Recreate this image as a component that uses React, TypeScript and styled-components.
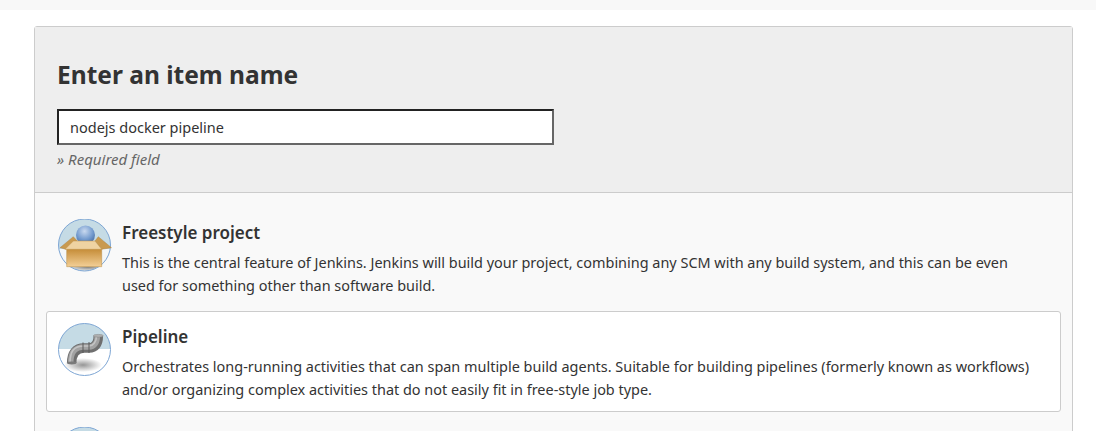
import React from 'react';
import styled, { createGlobalStyle } from 'styled-components';

const Global = createGlobalStyle`
  html, body { margin: 0; padding: 0; background: #fff; overflow: hidden; height: 431px; }
  body { font-family: "Noto Sans", "Open Sans", sans-serif; color: #333; }
`;

const TopStrip = styled.div`
  height: 10px;
  background: #f8f8f8;
`;

const Page = styled.main`
  padding: 16px 23px 0 34px;
`;

const Panel = styled.section`
  border: 1px solid #ccc;
  border-radius: 3px 3px 0 0;
  background: #f9f9f9;
`;

const Header = styled.header`
  background: #eee;
  border-bottom: 1px solid #ccc;
  padding: 30px 22px 0;
  height: 135px;
`;

const Title = styled.h1`
  margin: 0;
  font-size: 24.5px;
  line-height: 36px;
  font-weight: 700;
  color: #333;
`;

const NameInput = styled.input`
  display: block;
  box-sizing: border-box;
  width: 497px;
  height: 36px;
  margin-top: 16px;
  padding: 0 11px;
  border: 2px solid;
  border-color: #222 #666 #666 #222;
  background: #fff;
  font: 14.5px "Noto Sans", sans-serif;
  color: #333;
  outline: none;
`;

const Hint = styled.div`
  margin-top: 5px;
  font-size: 15px;
  line-height: 19px;
  font-style: italic;
  color: #666;
`;

const List = styled.div`
  padding: 11px 11px 0;
  display: flex;
  flex-direction: column;
`;

const Item = styled.article<{ $active?: boolean }>`
  display: flex;
  gap: 10px;
  box-sizing: border-box;
  height: ${p => (p.$active ? '101px' : '107px')};
  padding: ${p => (p.$active ? '11px' : '14px 11px')};
  border: 1px solid ${p => (p.$active ? '#ccc' : 'transparent')};
  border-radius: 3px;
  background: ${p => (p.$active ? '#fff' : 'transparent')};
`;

const IconSlot = styled.div`
  flex: 0 0 54px;
  width: 54px;
  height: 54px;
`;

const Body = styled.div`
  flex: 1;
  min-width: 0;
  padding-right: 10px;
`;

const ItemName = styled.h2`
  margin: 2px 0 0;
  font-size: 17px;
  line-height: 24px;
  font-weight: 600;
  color: #333;
`;

const Description = styled.p`
  margin: 6px 0 0;
  font-size: 14.45px;
  line-height: 23px;
  color: #333;
`;

const FreestyleIcon = () => (
  <svg width="54" height="54" viewBox="0 0 54 54">
    <defs>
      <radialGradient id="ball" cx="0.45" cy="0.3" r="0.75">
        <stop offset="0" stopColor="#c9d9ef" />
        <stop offset="0.6" stopColor="#7199cd" />
        <stop offset="1" stopColor="#45679c" />
      </radialGradient>
      <linearGradient id="box" x1="0" y1="0" x2="0" y2="1">
        <stop offset="0" stopColor="#c58c37" />
        <stop offset="1" stopColor="#f3cf96" />
      </linearGradient>
      <radialGradient id="shade" cx="0.5" cy="0.5" r="0.5">
        <stop offset="0" stopColor="#666" stopOpacity="0.8" />
        <stop offset="1" stopColor="#666" stopOpacity="0" />
      </radialGradient>
      <clipPath id="boxDisc"><circle cx="26.5" cy="26" r="25.8" /></clipPath>
    </defs>
    <circle cx="26.5" cy="26" r="26" fill="#c5dbe5" />
    <g clipPath="url(#boxDisc)">
      <rect y="30" width="54" height="24" fill="#f4f7f8" />
      <ellipse cx="30" cy="48" rx="23" ry="4.5" fill="url(#shade)" />
    </g>
    <circle cx="26.5" cy="26" r="26" fill="none" stroke="#7ea6d4" />
    <path d="M2 28.7 L15.3 17.7 L19.3 22 L8 30.3 Z" fill="#c99a4f" stroke="#a97a30" strokeWidth=".4" />
    <path d="M53.5 28.7 L40.3 17.7 L37 22 L43.7 30.3 Z" fill="#c99a4f" stroke="#a97a30" strokeWidth=".4" />
    <circle cx="27.5" cy="16" r="9.5" fill="url(#ball)" />
    <path d="M8.7 30 H43.7 V47.7 H8.7 Z" fill="url(#box)" stroke="#b98a40" strokeWidth=".5" />
    <path d="M7 30.3 H43.7 L37 22 H15.3 Z" fill="#efd3a2" stroke="#c09348" strokeWidth=".5" />
  </svg>
);

const PipelineIcon = () => (
  <svg width="54" height="54" viewBox="0 0 54 54">
    <defs>
      <clipPath id="disc"><circle cx="26.5" cy="26.5" r="26" /></clipPath>
      <radialGradient id="floor" cx="0.5" cy="0.5" r="0.5">
        <stop offset="0" stopColor="#8a8a8a" stopOpacity="0.9" />
        <stop offset="1" stopColor="#8a8a8a" stopOpacity="0" />
      </radialGradient>
    </defs>
    <g clipPath="url(#disc)">
      <rect width="54" height="54" fill="#fff" />
      <rect width="54" height="26" fill="#c5dbe5" />
      <ellipse cx="25" cy="42" rx="19" ry="7" fill="url(#floor)" />
    </g>
    <circle cx="26.5" cy="26.5" r="26" fill="none" stroke="#7ea6d4" />
    <path d="M13.7 40 C13.7 30 18 25 26 25 L31 25 C37 25 40.3 21 40.3 13" fill="none" stroke="#6f6f6f" strokeWidth="9.5" />
    <path d="M12.7 40 C12.7 29 17 24 26 24 L31 24 C36 24 39.3 20 39.3 13" fill="none" stroke="#a2a2a2" strokeWidth="5.5" />
    <path d="M12 40 C12 28 16 23 26 23 L31 23 C35 23 38.5 19 38.5 13" fill="none" stroke="#c4c4c4" strokeWidth="1.6" />
    <ellipse cx="13.7" cy="40" rx="4.8" ry="1.4" fill="#7a7a7a" />
    <path d="M25 19.5 V30 M31 19 V30" stroke="#5a5a5a" strokeWidth="1" />
    <ellipse cx="40.3" cy="12.8" rx="5" ry="1.4" fill="#b0b0b0" stroke="#808080" strokeWidth=".5" />
  </svg>
);

const App: React.FC = () => {
  return (
    <>
      <Global />
      <TopStrip />
      <Page>
        <Panel>
          <Header>
            <Title>Enter an item name</Title>
            <NameInput readOnly value="nodejs docker pipeline" />
            <Hint>» Required field</Hint>
          </Header>
          <List>
            <Item>
              <IconSlot><FreestyleIcon /></IconSlot>
              <Body>
                <ItemName>Freestyle project</ItemName>
                <Description>
                  This is the central feature of Jenkins. Jenkins will build your project, combining any SCM with any build system, and this can be even used for something other than software build.
                </Description>
              </Body>
            </Item>
            <Item $active>
              <IconSlot><PipelineIcon /></IconSlot>
              <Body>
                <ItemName>Pipeline</ItemName>
                <Description>
                  Orchestrates long-running activities that can span multiple build agents. Suitable for building pipelines (formerly known as workflows) and/or organizing complex activities that do not easily fit in free-style job type.
                </Description>
              </Body>
            </Item>
            <Item>
              <IconSlot><FreestyleIcon /></IconSlot>
            </Item>
          </List>
        </Panel>
      </Page>
    </>
  );
};

export default App;
